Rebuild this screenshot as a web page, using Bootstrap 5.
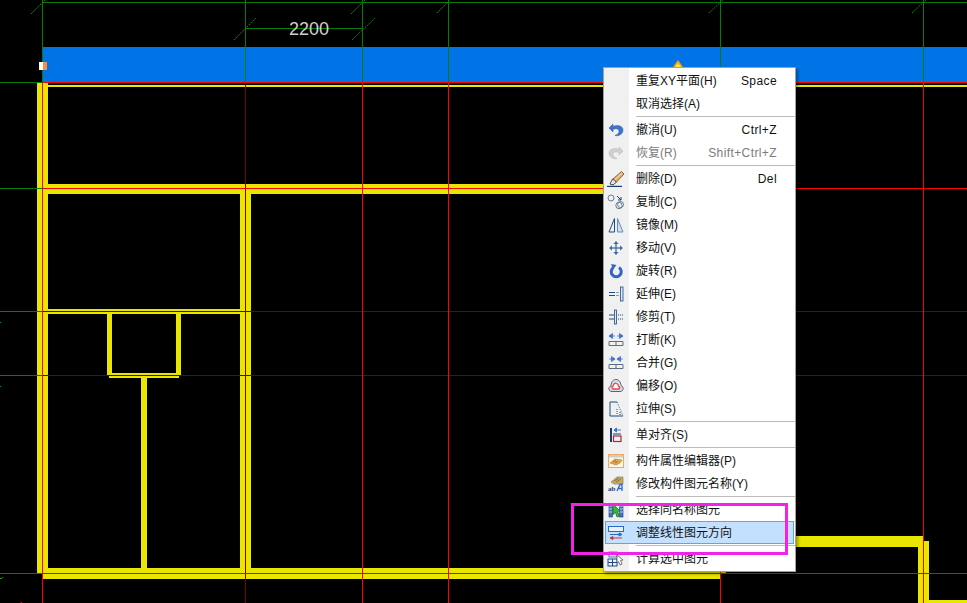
<!DOCTYPE html>
<html lang="zh-CN">
<head>
    <meta charset="UTF-8">
    <meta name="viewport" content="width=device-width, initial-scale=1.0">
    <title>CAD 右键菜单</title>
    <link href="https://cdn.jsdelivr.net/npm/bootstrap@5.3.3/dist/css/bootstrap.min.css" rel="stylesheet">
    <style>
        html, body {
            background: #000;
            overflow: hidden;
        }
        .stage {
            position: relative;
            width: 967px;
            height: 603px;
            overflow: hidden;
            background: #000;
        }
        .cad-view {
            position: absolute;
            inset: 0;
            display: block;
        }
        .cad-view .thin { shape-rendering: crispEdges; stroke-width: 1; }
        .dim-text {
            font-family: "Liberation Sans", sans-serif;
            font-size: 18px;
            fill: #cfcfcf;
        }
        .ctx-menu {
            position: absolute;
            left: 603px;
            top: 67px;
            width: 193px;
            min-width: 0;
            height: 505px;
            padding: 1px 0;
            margin: 0;
            border: 1px solid #a0a0a0;
            border-radius: 0;
            background: linear-gradient(to right, #f0f0f0 25px, #fff 25px);
            box-shadow: 2px 2px 3px rgba(0, 0, 0, .35);
            font-family: "Liberation Sans", "Noto Sans CJK SC", sans-serif;
            font-size: 12px;
            color: #111;
        }
        .ctx-item {
            display: flex;
            align-items: center;
            height: 23px;
            width: auto;
            margin: 0 1px;
            padding: 0 16px 0 0;
            border: 1px solid transparent;
            color: #111;
            line-height: 1;
        }
        .ctx-item.picked {
            background: #c3e0ff;
            border-color: #5ea6ea;
        }
        .ctx-item.off { color: #7c7c7c; }
        .ctx-ico {
            flex: none;
            width: 20px;
            height: 16px;
            margin-right: 10px;
            display: flex;
            justify-content: center;
        }
        .ctx-ico svg { display: block; }
        .ctx-key { margin-left: auto; letter-spacing: .4px; }
        .ctx-sep {
            margin: 1px 0 1px 32px;
            border-top: 1px solid #bcbcbc;
        }
        .note-box {
            position: absolute;
            z-index: 1001;
            left: 571px;
            top: 503px;
            width: 217px;
            height: 52px;
            border: 3px solid #f222e8;
            pointer-events: none;
        }
        .ico-txt {
            font-family: "Liberation Serif", serif;
            font-weight: 700;
            font-size: 7px;
            fill: #1c3a78;
        }
    </style>
</head>
<body>
    <div class="stage">
        <!-- drawing area -->
        <svg class="cad-view" width="967" height="603" viewBox="0 0 967 603">
            <rect x="43" y="47" width="924" height="35" fill="#0074e6"/>

            <!-- walls -->
            <g fill="#e9e600">
                <rect x="37" y="83" width="11" height="490"/>
                <rect x="48" y="85" width="919" height="2"/>
                <rect x="48" y="184" width="600" height="10"/>
                <rect x="240" y="194" width="11" height="374"/>
                <rect x="48" y="309" width="192" height="5"/>
                <rect x="107" y="314" width="5" height="61"/>
                <rect x="176" y="314" width="5" height="61"/>
                <rect x="107" y="373" width="74" height="2"/>
                <rect x="109" y="376" width="70" height="2"/>
                <rect x="141" y="378" width="6" height="190"/>
                <rect x="43" y="568" width="683" height="5"/>
                <rect x="43" y="573" width="677" height="6"/>
                <rect x="790" y="536" width="133" height="11"/>
                <rect x="918" y="547" width="5" height="56"/>
                <rect x="923" y="541" width="6" height="62"/>
                <rect x="929" y="600" width="38" height="3"/>
            </g>

            <!-- dim axis lines -->
            <g class="thin" stroke="#7a0000">
                <line x1="43" y1="311.5" x2="967" y2="311.5"/>
                <line x1="43" y1="375.5" x2="967" y2="375.5"/>
                <line x1="245.5" y1="82" x2="245.5" y2="603"/>
            </g>

            <!-- red axis lines -->
            <g class="thin" stroke="#ff0000">
                <line x1="43" y1="82.5" x2="967" y2="82.5"/>
                <line x1="43" y1="188.5" x2="967" y2="188.5"/>
                <line x1="43" y1="573.5" x2="967" y2="573.5"/>
                <line x1="42.5" y1="82" x2="42.5" y2="603"/>
                <line x1="362.5" y1="82" x2="362.5" y2="603"/>
                <line x1="448.5" y1="82" x2="448.5" y2="603"/>
                <line x1="720.5" y1="82" x2="720.5" y2="603"/>
                <line x1="923.5" y1="82" x2="923.5" y2="603"/>
            </g>

            <!-- green dimension lines -->
            <g class="thin" stroke="#077a07">
                <line x1="43" y1="2.5" x2="967" y2="2.5"/>
                <line x1="245" y1="28.5" x2="362" y2="28.5"/>
                <line x1="42.5" y1="0" x2="42.5" y2="82"/>
                <line x1="245.5" y1="0" x2="245.5" y2="82"/>
                <line x1="362.5" y1="0" x2="362.5" y2="82"/>
                <line x1="448.5" y1="0" x2="448.5" y2="82"/>
                <line x1="720.5" y1="0" x2="720.5" y2="82"/>
                <line x1="923.5" y1="0" x2="923.5" y2="82"/>
                <line x1="0" y1="82.5" x2="43" y2="82.5"/>
                <line x1="0" y1="188.5" x2="43" y2="188.5"/>
                <line x1="0" y1="311.5" x2="43" y2="311.5"/>
                <line x1="0" y1="375.5" x2="43" y2="375.5"/>
                <line x1="0" y1="573.5" x2="43" y2="573.5"/>
            </g>
            <g stroke="#0a8a0a" stroke-width="1" stroke-dasharray="2 1" fill="none">
                <line x1="31" y1="14" x2="45" y2="0"/>
                <line x1="234" y1="40" x2="256" y2="18"/>
                <line x1="352" y1="40" x2="375" y2="18"/>
                <line x1="351" y1="14" x2="365" y2="0"/>
                <line x1="437" y1="13" x2="450" y2="0"/>
                <line x1="709" y1="13" x2="723" y2="0"/>
                <line x1="912" y1="13" x2="926" y2="0"/>
            </g>
            <g fill="#0aa00a">
                <rect x="0" y="322" width="1" height="1"/>
                <rect x="0" y="386" width="1" height="1"/>
                <rect x="0" y="578" width="2" height="1"/>
                <rect x="2" y="577" width="1" height="1"/>
            </g>
            <rect x="21" y="602" width="1" height="1" fill="#ff0000"/>

            <text class="dim-text" x="289" y="35">2200</text>

            <!-- grips on the selected wall -->
            <rect x="39" y="62" width="4" height="8" fill="#fff"/>
            <rect x="43" y="62" width="4" height="8" fill="#ff8c3a"/>
            <path d="M678 60 L683 67 H673 Z" fill="#ffa000"/>
            <path d="M678 63 L681 67 H675 Z" fill="#ffe850"/>
        </svg>

        <!-- right click menu -->
        <div class="dropdown-menu show ctx-menu">
            <div class="dropdown-item ctx-item"><span class="ctx-ico"></span><span>重复XY平面(H)</span><span class="ctx-key">Space</span></div>
            <div class="dropdown-item ctx-item"><span class="ctx-ico"></span><span>取消选择(A)</span></div>
            <hr class="dropdown-divider ctx-sep">
            <div class="dropdown-item ctx-item">
                <span class="ctx-ico"><svg width="16" height="16" viewBox="0 0 16 16"><path d="M5 2 L1 6 L5 10 V7.5 C8 6 11 7 11 9.5 C11 11 9.5 12.5 7 13.5 C11 14.5 15 12 15 8 C15 4 9.5 2.5 5 4.5 Z" fill="#3f74c9" stroke="#2a55a0" stroke-width=".5"/></svg></span>
                <span>撤消(U)</span><span class="ctx-key">Ctrl+Z</span>
            </div>
            <div class="dropdown-item ctx-item off">
                <span class="ctx-ico"><svg width="16" height="16" viewBox="0 0 16 16"><path d="M11 2 L15 6 L11 10 V7.5 C8 6 5 7 5 9.5 C5 11 6.5 12.5 9 13.5 C5 14.5 1 12 1 8 C1 4 6.5 2.5 11 4.5 Z" fill="#d0d0d0" stroke="#b4b4b4" stroke-width=".5"/></svg></span>
                <span>恢复(R)</span><span class="ctx-key">Shift+Ctrl+Z</span>
            </div>
            <hr class="dropdown-divider ctx-sep">
            <div class="dropdown-item ctx-item">
                <span class="ctx-ico"><svg width="18" height="16" viewBox="0 0 18 16"><path d="M0 15.5 H15" stroke="#1c3a78" stroke-width="1.4"/><path d="M3 13 L5.5 8 L9.5 11 L6 14 Z" fill="#e8e8e8" stroke="#333" stroke-width=".9"/><path d="M6 8 L14.5 0.5 L17 3 L9.5 11 Z" fill="#e8b060" stroke="#5a4a38" stroke-width=".8"/><path d="M7.5 9 L15 2" stroke="#fff0d0" stroke-width=".8"/></svg></span>
                <span>删除(D)</span><span class="ctx-key">Del</span>
            </div>
            <div class="dropdown-item ctx-item">
                <span class="ctx-ico"><svg width="18" height="16" viewBox="0 0 18 16" fill="none"><circle cx="4" cy="4" r="3" stroke="#6b7a90"/><circle cx="12" cy="11.5" r="3.2" stroke="#6b7a90"/><circle cx="13.5" cy="10.5" r="3" stroke="#6b7a90"/><path d="M10 2 L14 6 M14 3 V6 H11" stroke="#1c3a78"/></svg></span>
                <span>复制(C)</span>
            </div>
            <div class="dropdown-item ctx-item">
                <span class="ctx-ico"><svg width="16" height="16" viewBox="0 0 16 16"><path d="M1 15 L6.5 1.5 V15 Z" fill="none" stroke="#1c4a90"/><path d="M15 15 L9.5 1.5 V15 Z" fill="#cfdff3" stroke="#6a8cc0"/></svg></span>
                <span>镜像(M)</span>
            </div>
            <div class="dropdown-item ctx-item">
                <span class="ctx-ico"><svg width="16" height="16" viewBox="0 0 16 16" fill="#1c4a80"><path d="M7.5 3 H8.5 V13 H7.5 Z M3 7.5 H13 V8.5 H3 Z"/><path d="M8 1 L10.5 4 H5.5 Z M8 15 L10.5 12 H5.5 Z M1 8 L4 5.5 V10.5 Z M15 8 L12 5.5 V10.5 Z" fill="#3a6aa8"/></svg></span>
                <span>移动(V)</span>
            </div>
            <div class="dropdown-item ctx-item">
                <span class="ctx-ico"><svg width="16" height="16" viewBox="0 0 16 16"><path d="M5.5 4.5 A5 5 0 1 0 11 4.5" fill="none" stroke="#2f68c0" stroke-width="3"/><path d="M3 1 L8.5 2 L5 6.5 Z" fill="#2f68c0"/></svg></span>
                <span>旋转(R)</span>
            </div>
            <div class="dropdown-item ctx-item">
                <span class="ctx-ico"><svg width="16" height="16" viewBox="0 0 16 16"><path d="M1 6.5 H7 M1 9.5 H7" stroke="#1c4a90"/><path d="M8.5 6.5 H11 M8.5 9.5 H11" stroke="#1c4a90" stroke-dasharray="1 1"/><rect x="12.5" y="1" width="2.5" height="14" fill="#dfe8f5" stroke="#1c4a90" stroke-width=".8"/></svg></span>
                <span>延伸(E)</span>
            </div>
            <div class="dropdown-item ctx-item">
                <span class="ctx-ico"><svg width="16" height="16" viewBox="0 0 16 16" stroke="#1c4a80" fill="none"><rect x="6.5" y="1" width="2" height="14" fill="#dfe8f5" stroke-width=".8"/><path d="M1 6 H6 M1 10 H6"/><path d="M10 6 H15 M10 10 H15" stroke-dasharray="1 1"/></svg></span>
                <span>修剪(T)</span>
            </div>
            <div class="dropdown-item ctx-item">
                <span class="ctx-ico"><svg width="16" height="16" viewBox="0 0 16 16"><path d="M7 4 H1 M1 4 L4.5 1.5 V6.5 Z M9 4 H15 M15 4 L11.5 1.5 V6.5 Z" fill="#3f74c9" stroke="#3f74c9" stroke-width=".8"/><path d="M1 9.5 H15 M1 13.5 H15 M1 9.5 V13.5 M8 9.5 V13.5 M15 9.5 V13.5" fill="none" stroke="#5e6e84"/></svg></span>
                <span>打断(K)</span>
            </div>
            <div class="dropdown-item ctx-item">
                <span class="ctx-ico"><svg width="16" height="16" viewBox="0 0 16 16"><path d="M1 4 H7 M7 4 L3.5 1.5 V6.5 Z M15 4 H9 M9 4 L12.5 1.5 V6.5 Z" fill="#3f74c9" stroke="#3f74c9" stroke-width=".8"/><path d="M1 9.5 H15 M1 13.5 H15 M1 9.5 V13.5 M8 9.5 V13.5 M15 9.5 V13.5" fill="none" stroke="#5e6e84"/></svg></span>
                <span>合并(G)</span>
            </div>
            <div class="dropdown-item ctx-item">
                <span class="ctx-ico"><svg width="16" height="16" viewBox="0 0 16 16" fill="none"><path d="M4 13.5 C0 13.5 0 8.5 3 8 C3 3 6 1.5 8 1.5 C11 1.5 12.5 4 13 7.5 C16 8.5 16 13.5 12 13.5 Z" fill="#d8dee8" stroke="#55657c"/><path d="M5.5 11 C3.5 11 3.5 8.5 5 8.5 C5 6 7 4.5 8.5 5.5 C10 6 10.5 7.5 10.5 8.5 C12.5 9 12 11 10.5 11 Z" fill="#fff" stroke="#e04848" stroke-width="1.3"/></svg></span>
                <span>偏移(O)</span>
            </div>
            <div class="dropdown-item ctx-item">
                <span class="ctx-ico"><svg width="16" height="16" viewBox="0 0 16 16" fill="none"><path d="M9 1 H2 V15 H15" stroke="#1c4a80"/><path d="M9 1 L15 15" stroke="#1c4a80" stroke-dasharray="1 1.5"/><path d="M9 8 V14 M12 11 V14" stroke="#1c4a80" stroke-dasharray="1 1"/></svg></span>
                <span>拉伸(S)</span>
            </div>
            <hr class="dropdown-divider ctx-sep">
            <div class="dropdown-item ctx-item">
                <span class="ctx-ico"><svg width="16" height="16" viewBox="0 0 16 16" fill="none"><rect x="2" y="1" width="2" height="14" fill="#1c3a78"/><path d="M13 3 H6 M6 3 L8.5 1 V5 Z" fill="#3f74c9" stroke="#3f74c9"/><rect x="5.5" y="9" width="7.5" height="5.5" stroke="#b02838" stroke-width="1.2"/><path d="M5 7 H13" stroke="#1c3a78"/></svg></span>
                <span>单对齐(S)</span>
            </div>
            <hr class="dropdown-divider ctx-sep">
            <div class="dropdown-item ctx-item">
                <span class="ctx-ico"><svg width="16" height="16" viewBox="0 0 16 16"><rect x=".5" y="1.5" width="15" height="13" fill="#fff6e8" stroke="#f0a860"/><rect x="1" y="2" width="14" height="2.5" fill="#c8ccd4"/><path d="M2 10 L7 6 L14 7 L12 10 L8 12 Z" fill="#e0a850" stroke="#a87830" stroke-width=".6"/><path d="M5 9 L8 7.5 M7 10 L10 8.5" stroke="#8a6020" stroke-width=".7"/></svg></span>
                <span>构件属性编辑器(P)</span>
            </div>
            <div class="dropdown-item ctx-item">
                <span class="ctx-ico"><svg width="16" height="16" viewBox="0 0 16 16"><path d="M3 6 L9 1 H15 V8 H6 Z" fill="#c9a860" stroke="#7a8a70" stroke-width=".7"/><path d="M6 5 L11 2 M8 6 L13 3" stroke="#7a5a20" stroke-width=".7"/><text class="ico-txt" x="0" y="15">ab</text><path d="M9 15 L12 8.5 H14 V15 M10.5 12.5 H14" fill="none" stroke="#2f68c0" stroke-width="1.3"/></svg></span>
                <span>修改构件图元名称(Y)</span>
            </div>
            <hr class="dropdown-divider ctx-sep">
            <div class="dropdown-item ctx-item">
                <span class="ctx-ico"><svg width="16" height="16" viewBox="0 0 16 16"><rect x="1" y="2" width="3.5" height="13" fill="#3f74c9" stroke="#1c3a78" stroke-width=".6"/><rect x="11.5" y="2" width="3.5" height="13" fill="#3f74c9" stroke="#1c3a78" stroke-width=".6"/><path d="M1 4 H15 M1 7 H4 M1 10 H4 M12 7 H15 M12 10 H15" stroke="#dfe8f5" stroke-width=".8"/><path d="M5 2 L12 9 L9.5 9.5 L11.5 14 L9 15 L7.5 10.5 L5 12.5 Z" fill="#38b838" stroke="#1a6a1a" stroke-width=".7"/></svg></span>
                <span>选择同名称图元</span>
            </div>
            <div class="dropdown-item ctx-item picked">
                <span class="ctx-ico"><svg width="18" height="16" viewBox="0 0 18 16" fill="none"><rect x="1.5" y="1.5" width="15" height="5" stroke="#2f68c0" fill="#e8f2ff"/><path d="M3 9.5 H15 M15 9.5 L12 8 V11 Z" stroke="#2f68c0" fill="#2f68c0"/><path d="M3 13 H15 M3 13 L6 11.5 V14.5 Z" stroke="#c83a3a" fill="#c83a3a"/></svg></span>
                <span>调整线性图元方向</span>
            </div>
            <hr class="dropdown-divider ctx-sep">
            <div class="dropdown-item ctx-item">
                <span class="ctx-ico"><svg width="18" height="16" viewBox="0 0 18 16"><rect x="2" y="1" width="8" height="5" fill="#dfe8f5" stroke="#5a7ab0"/><rect x="1" y="8" width="9" height="7" fill="#eef2f8" stroke="#1c4a90"/><path d="M1 11.5 H10 M5.5 8 V15" stroke="#1c4a90"/><path d="M10 4 L16 9 L13.5 9.5 L15 13 L13 14 L11.5 10.5 L10 12 Z" fill="#fff" stroke="#555" stroke-width=".8"/></svg></span>
                <span>计算选中图元</span>
            </div>
        </div>

        <div class="note-box"></div>
    </div>

    <script src="https://cdn.jsdelivr.net/npm/bootstrap@5.3.3/dist/js/bootstrap.bundle.min.js"></script>
</body>
</html>
